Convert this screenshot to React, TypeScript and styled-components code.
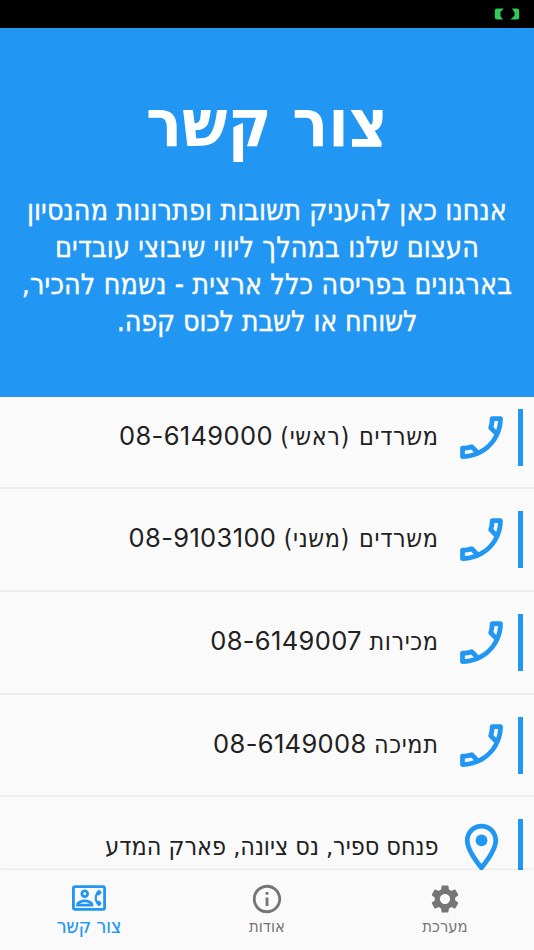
import React from "react";
import styled, { createGlobalStyle } from "styled-components";
import {
  MdOutlineCall,
  MdOutlineContactPhone,
  MdOutlineInfo,
  MdOutlineLocationOn,
  MdSettings,
} from "react-icons/md";

const blue = "#2196f3";

const GlobalStyle = createGlobalStyle`
  * { box-sizing: border-box; }
  html, body { margin: 0; padding: 0; overflow: hidden; background: #fafafa; }
`;

const Screen = styled.div`
  width: 534px;
  height: 950px;
  display: flex;
  flex-direction: column;
  overflow: hidden;
  background: #fafafa;
  font-family: "DejaVu Sans Condensed", "DejaVu Sans", "Liberation Sans", sans-serif;
  direction: rtl;
`;

const StatusBar = styled.div`
  flex: none;
  height: 28px;
  padding: 8px 14px 0 0;
  background: #000;
`;

const Battery = styled.svg`
  display: block;
  width: 26px;
  height: 12px;
`;

const Header = styled.header`
  flex: none;
  height: 369px;
  background: ${blue};
  color: #fff;
  text-align: center;
`;

const Title = styled.h1`
  margin: 0;
  padding-top: 49px;
  font-size: 66.5px;
  line-height: 92px;
  font-weight: 700;
`;

const Intro = styled.p`
  margin: 0;
  padding-top: 23px;
`;

const IntroLine = styled.span<{ $spacing: number }>`
  display: block;
  font-size: 28.4px;
  line-height: 37px;
  white-space: nowrap;
  letter-spacing: ${(p) => p.$spacing}px;
  -webkit-text-stroke: 0.35px #fff;
`;

const List = styled.main`
  flex: 1;
  min-height: 0;
  overflow: hidden;
`;

const Rows = styled.div`
  margin-top: -10.3px;
`;

const Row = styled.div`
  display: flex;
  align-items: center;
  height: 102.7px;
  padding-right: 11.5px;
  border-bottom: 2px solid #eeeeee;
`;

const Accent = styled.div`
  width: 4.5px;
  height: 57px;
  background: ${blue};
`;

const RowIcon = styled.div<{ $mirrored?: boolean }>`
  display: flex;
  margin-right: 8px;
  color: ${blue};
  transform: ${(p) => (p.$mirrored ? "scaleX(-1)" : "none")};
`;

const RowText = styled.div`
  display: flex;
  align-items: baseline;
  gap: 7.5px;
  margin-right: 14.5px;
  padding-bottom: 1.6px;
  color: #212121;
  font-size: 24.9px;
  line-height: 36px;
  white-space: nowrap;
`;

const Label = styled.span<{ $spaced: boolean }>`
  letter-spacing: ${(p) => (p.$spaced ? 0.6 : 0)}px;
  word-spacing: ${(p) => (p.$spaced ? 1.5 : 0)}px;
`;

const Phone = styled.bdi`
  direction: ltr;
  font-family: Inter, sans-serif;
  font-size: 25.5px;
  letter-spacing: 0.35px;
`;

const Nav = styled.nav`
  flex: none;
  display: grid;
  grid-template-columns: repeat(3, 1fr);
  height: 80px;
  background: #fafafa;
  box-shadow: 0 -1px 2px rgba(0, 0, 0, 0.08);
  z-index: 1;
`;

const Tab = styled.div<{ $active?: boolean }>`
  display: flex;
  flex-direction: column;
  align-items: center;
  padding-top: ${(p) => (p.$active ? 10.5 : 12)}px;
  color: ${(p) => (p.$active ? blue : "#757575")};
`;

const TabLabel = styled.span<{ $active?: boolean }>`
  margin-top: ${(p) => (p.$active ? 1 : 0)}px;
  font-size: ${(p) => (p.$active ? 19.3 : 16.5)}px;
  line-height: 22px;
  -webkit-text-stroke: ${(p) => (p.$active ? 0.2 : 0)}px currentColor;
`;

const intro = [
  { text: "אנחנו כאן להעניק תשובות ופתרונות מהנסיון", spacing: 0.09 },
  { text: "העצום שלנו במהלך ליווי שיבוצי עובדים", spacing: 0.12 },
  { text: "בארגונים בפריסה כלל ארצית - נשמח להכיר,", spacing: 0.12 },
  { text: "לשוחח או לשבת לכוס קפה.", spacing: -0.15 },
];

const contacts = [
  { text: "משרדים (ראשי)", phone: "08-6149000" },
  { text: "משרדים (משני)", phone: "08-9103100" },
  { text: "מכירות", phone: "08-6149007" },
  { text: "תמיכה", phone: "08-6149008" },
  { text: "פנחס ספיר, נס ציונה, פארק המדע" },
];

export default function App() {
  return (
    <Screen>
      <GlobalStyle />
      <StatusBar>
        <Battery viewBox="0 0 26 12">
          <path d="M3 .5H9.800L6.500 4V8L9 11.500H3Q.8 11.500 .8 9.300V2.700Q.8 .5 3 .5Z" fill="#34c759" />
          <path d="M18 .5H23Q25.200 .5 25.200 2.700V9.300Q25.200 11.500 23 11.500H16.500L20.500 7.500V4.500Z" fill="#34c759" />
        </Battery>
      </StatusBar>
      <Header>
        <Title>צור קשר</Title>
        <Intro>
          {intro.map((line) => (
            <IntroLine key={line.text} $spacing={line.spacing}>
              {line.text}
            </IntroLine>
          ))}
        </Intro>
      </Header>
      <List>
        <Rows>
          {contacts.map((c) => (
            <Row key={c.text}>
              <Accent />
              <RowIcon $mirrored={!!c.phone}>
                {c.phone ? <MdOutlineCall size={57} /> : <MdOutlineLocationOn size={57} />}
              </RowIcon>
              <RowText>
                <Label $spaced={!!c.phone}>{c.text}</Label>
                {c.phone && <Phone>{c.phone}</Phone>}
              </RowText>
            </Row>
          ))}
        </Rows>
      </List>
      <Nav>
        <Tab>
          <MdSettings size={34} />
          <TabLabel>מערכת</TabLabel>
        </Tab>
        <Tab>
          <MdOutlineInfo size={34} />
          <TabLabel>אודות</TabLabel>
        </Tab>
        <Tab $active>
          <MdOutlineContactPhone size={34} />
          <TabLabel $active>צור קשר</TabLabel>
        </Tab>
      </Nav>
    </Screen>
  );
}
